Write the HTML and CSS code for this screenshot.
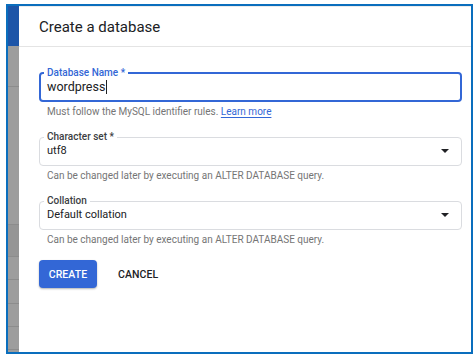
FILE: index.html
```html
<!DOCTYPE html>
<html>
<head>
<meta charset="utf-8">
<link rel="stylesheet" href="styles.css">
</head>
<body>
<div class="frame">
  <div class="strip">
    <div class="s-top"></div>
    <div class="s-row s-h40"></div>
    <div class="s-row s-h138"></div>
    <div class="s-row s-dark s-h32"></div>
    <div class="s-row s-h23"></div>
    <div class="s-row s-h24"></div>
    <div class="s-row s-h23"></div>
    <div class="s-row s-h23"></div>
  </div>
  <div class="dialog">
    <div class="header">
      <h1 class="title">Create a database</h1>
    </div>
    <div class="body">
      <div class="field">
        <fieldset class="box box-focus">
          <legend class="label label-focus">Database Name *</legend>
          <div class="value value-input">wordpress<span class="caret"></span></div>
        </fieldset>
        <p class="hint">Must follow the MySQL identifier rules. <a class="link" href="#">Learn more</a></p>
      </div>
      <div class="field">
        <fieldset class="box">
          <legend class="label">Character set *</legend>
          <div class="value value-select"><span>utf8</span><span class="arrow"></span></div>
        </fieldset>
        <p class="hint">Can be changed later by executing an ALTER DATABASE query.</p>
      </div>
      <div class="field">
        <fieldset class="box">
          <legend class="label">Collation</legend>
          <div class="value value-select"><span>Default collation</span><span class="arrow"></span></div>
        </fieldset>
        <p class="hint">Can be changed later by executing an ALTER DATABASE query.</p>
      </div>
      <div class="actions">
        <button class="btn btn-primary">CREATE</button>
        <button class="btn btn-text">CANCEL</button>
      </div>
    </div>
  </div>
</div>
</body>
</html>
```
FILE: styles.css
```css
* { box-sizing: border-box; }
html, body { margin: 0; padding: 0; background: #ffffff; }
body {
  font-family: Roboto, "Liberation Sans", Arial, sans-serif;
  color: #202124;
  width: 475px;
  height: 360px;
  overflow: hidden;
}
.frame {
  margin: 4px 0 0 6px;
  width: 467px;
  height: 350px;
  border: 2px solid #0a6ebd;
  display: flex;
  overflow: hidden;
}
.strip {
  width: 11px;
  flex: none;
  display: flex;
  flex-direction: column;
  background: #9d9d9d;
}
.s-top { height: 40px; background: #1d55a8; flex: none; }
.s-row { flex: none; border-bottom: 1px solid #8c8c8c; }
.s-dark { background: #959595; }
.s-h40 { height: 41px; }
.s-h138 { height: 138px; }
.s-h32 { height: 32px; }
.s-h23 { height: 23px; }
.s-h24 { height: 24px; }

.dialog {
  flex: 1;
  background: #fff;
  border-top: 1px solid #ececec;
}
.header {
  padding: 10px 0 9px 20px;
  border-bottom: 1px solid #e4e4e4;
}
.title {
  margin: 0;
  font-size: 15px;
  line-height: 20px;
  font-weight: 400;
  color: #202124;
}
.body {
  padding: 20px 9px 0 20px;
  display: flex;
  flex-direction: column;
  gap: 13px;
}
.field { display: flex; flex-direction: column; }
.box {
  margin: 0;
  padding: 0 4px 6px 4px;
  border: 1px solid #dadce0;
  border-radius: 4px;
  min-inline-size: 0;
}
.box-focus {
  border: 2px solid #3367d6;
  padding: 0 3px 5px 3px;
}
.label {
  padding: 0 3px;
  font-size: 10px;
  line-height: 12px;
  font-weight: 500;
  color: #3c4043;
}
.label-focus { color: #3367d6; }
.value {
  padding: 0 3px;
  font-size: 11px;
  line-height: 16px;
  color: #202124;
  display: flex;
  align-items: center;
}
.value-input { font-size: 12.5px; }
.value-select { justify-content: space-between; padding-right: 8px; }
.caret {
  display: inline-block;
  width: 1px;
  height: 14px;
  background: #202124;
  margin-left: 1px;
}
.arrow {
  width: 0;
  height: 0;
  border-left: 4px solid transparent;
  border-right: 4px solid transparent;
  border-top: 4px solid #202124;
}
.hint {
  margin: 4px 0 0 8px;
  font-size: 10px;
  line-height: 12px;
  color: #757575;
}
.link {
  color: #3367d6;
  text-decoration: underline;
  text-underline-offset: 2px;
}
.actions {
  display: flex;
  align-items: center;
  gap: 11px;
  margin-top: 1px;
}
.btn {
  font-family: Roboto, "Liberation Sans", Arial, sans-serif;
  font-size: 10.5px;
  font-weight: 500;
  letter-spacing: 0.1px;
  height: 28px;
  border: none;
  border-radius: 4px;
  cursor: pointer;
}
.btn-primary {
  width: 58px;
  background: #3367d6;
  color: #fff;
  box-shadow: 0 1px 2px rgba(0,0,0,0.3);
}
.btn-text {
  background: transparent;
  color: #202124;
  padding: 0 10px;
}
```
